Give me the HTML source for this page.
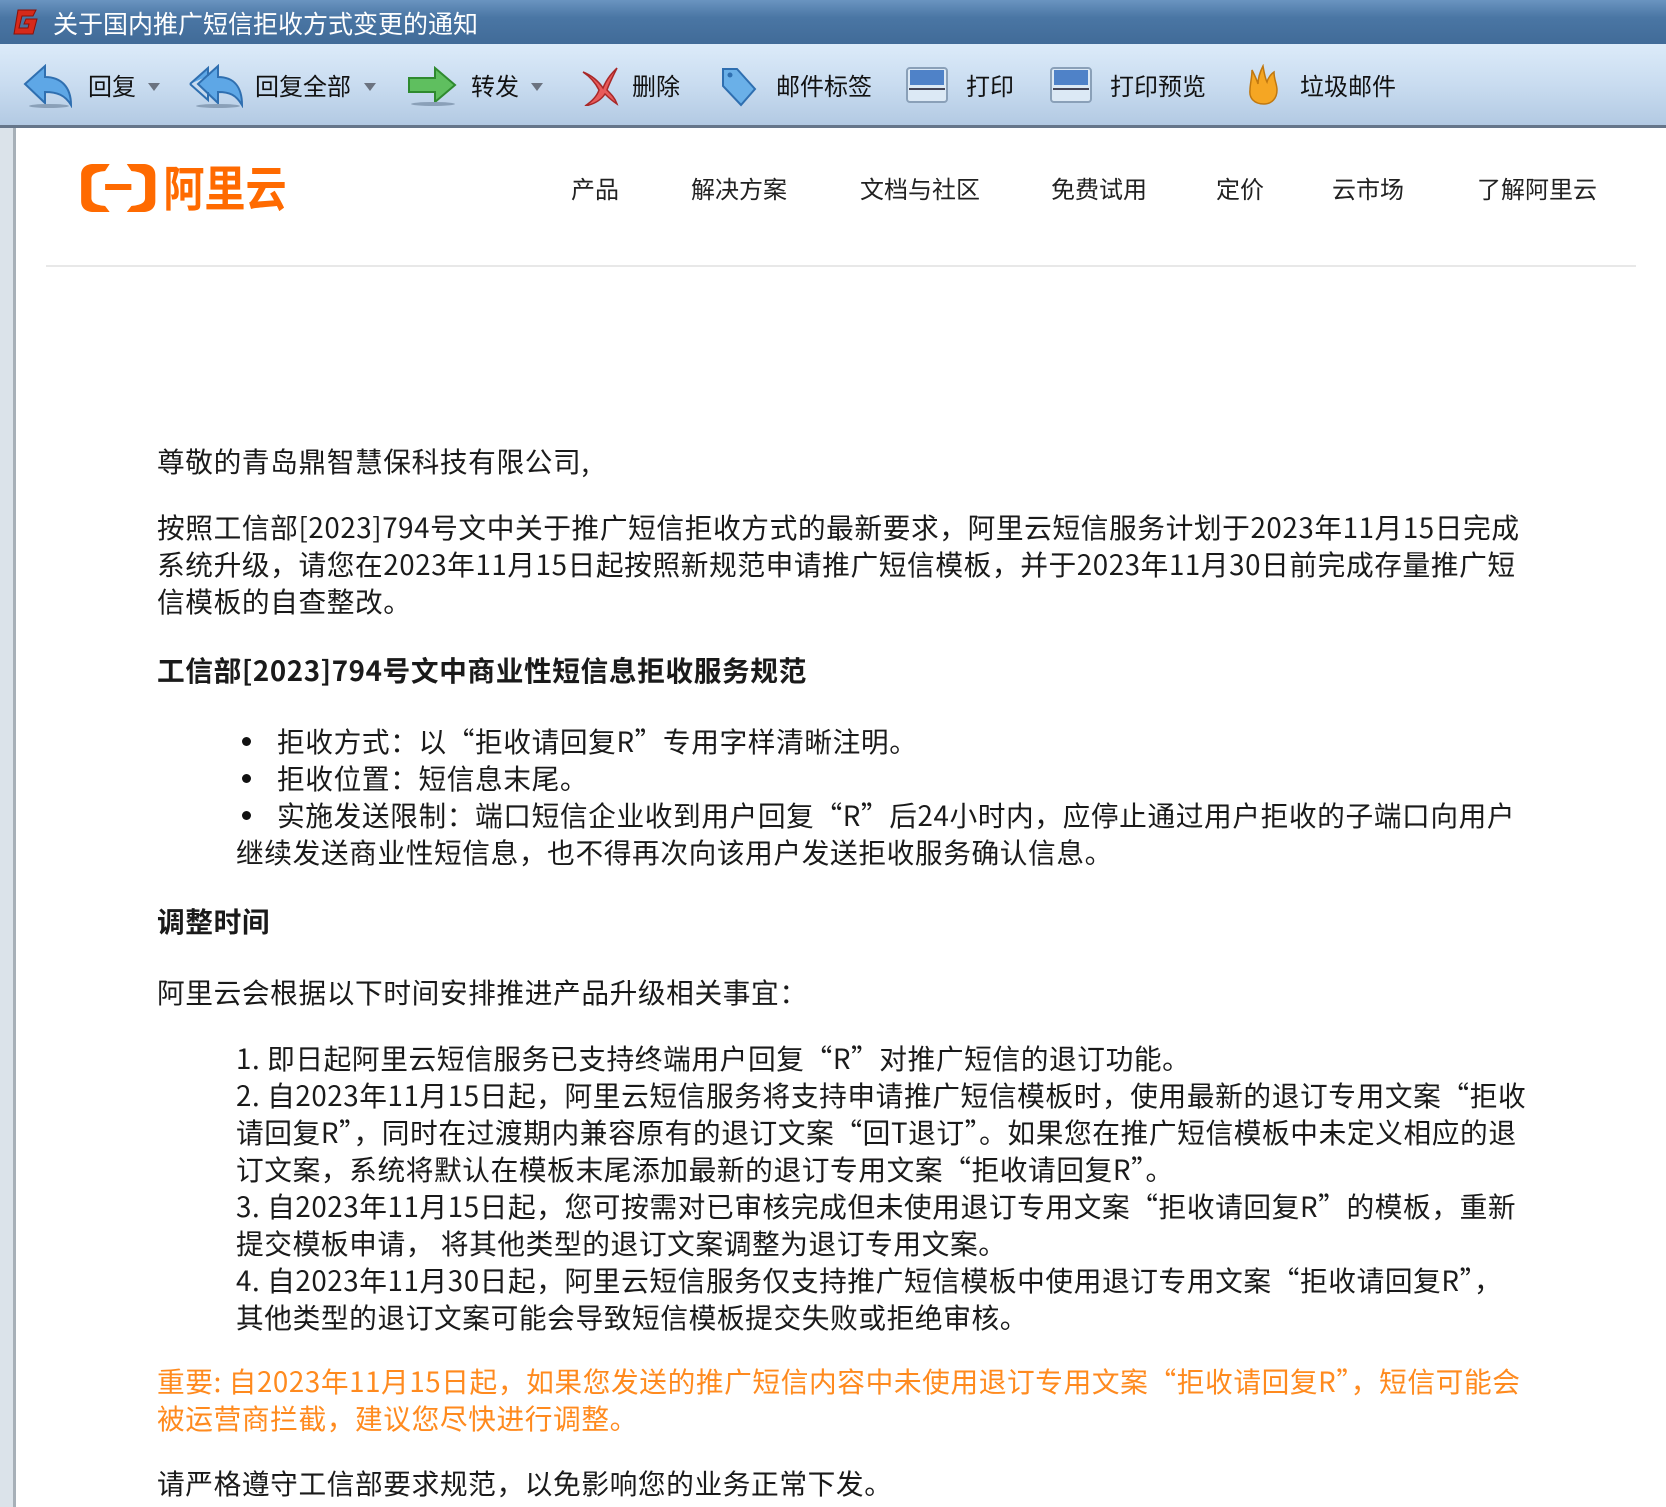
<!DOCTYPE html>
<html><head><meta charset="utf-8"><style>
*{margin:0;padding:0;box-sizing:border-box}
body{width:1666px;height:1507px;overflow:hidden;background:#fff;font-family:"Liberation Sans","Noto Sans CJK SC",sans-serif;position:relative}
.title{position:absolute;left:0;top:0;width:1666px;height:44px;background:linear-gradient(#6a94c0,#4a76a4 40%,#416b98);color:#fff;font-size:25px;line-height:46px;font-family:"Noto Sans CJK SC",sans-serif}
.title span{position:absolute;left:53px;top:0}
.tb{position:absolute;left:0;top:44px;width:1666px;height:84px;background:linear-gradient(#dcebf9,#c9dcf0 50%,#b3cae3);border-bottom:3px solid #66768a}
.tb .t{position:absolute;top:0;line-height:82px;font-size:24px;color:#111;font-family:"Noto Sans CJK SC",sans-serif}
.tb svg{position:absolute}
.dd{position:absolute;top:39px;width:0;height:0;border-left:6px solid transparent;border-right:6px solid transparent;border-top:8px solid #6b7380}
.strip{position:absolute;left:0;top:128px;width:16px;height:1379px;background:#dbe3ea;border-right:3px solid #a7b0b8}
.nav{position:absolute;top:171px;font-size:24px;color:#222;line-height:34px;font-family:"Noto Sans CJK SC",sans-serif}
.sep{position:absolute;left:46px;top:265px;width:1590px;height:2px;background:#e8e8e8}
.p{position:absolute;left:157px;font-family:"Noto Sans CJK SC",sans-serif;font-size:27.7px;letter-spacing:0.6px;line-height:37px;color:#1a1a1a;white-space:nowrap}
.b{font-weight:bold}
.or{color:#ff8a1e}
.dot{display:inline-block;width:9px;height:9px;border-radius:50%;background:#111;margin:0 26px 5px 6px;vertical-align:middle}
</style></head><body>
<div class="title">
<svg style="position:absolute;left:10px;top:7px" width="30" height="30" viewBox="0 0 30 30"><path d="M8 3h18l-3 6H12l-3 12h9l1-4h-5l2-5h11l-4 15H4z" fill="#d62a1a" stroke="#8a1008" stroke-width="1"/></svg>
<span>关于国内推广短信拒收方式变更的通知</span></div>
<div class="tb">
<svg style="left:23px;top:20px" width="52" height="44" viewBox="0 0 52 44"><path d="M2 20L22 2v11c16 0 26 10 26 28c-6-10-14-13-26-13v11z" fill="#5ea7e6" stroke="#2f6fb0" stroke-width="2"/><ellipse cx="26" cy="42" rx="20" ry="2" fill="#8aa0b8"/></svg>
<span class="t" style="left:88px">回复</span><i class="dd" style="left:148px"></i>
<svg style="left:188px;top:20px" width="58" height="44" viewBox="0 0 58 44"><path d="M2 20L20 4v8M10 20L30 2v11c16 0 24 10 24 28c-6-10-12-13-24-13v11z" fill="#5ea7e6" stroke="#2f6fb0" stroke-width="2"/><path d="M2 20L20 36v-8" fill="none" stroke="#2f6fb0" stroke-width="2"/><ellipse cx="30" cy="42" rx="22" ry="2" fill="#8aa0b8"/></svg>
<span class="t" style="left:255px">回复全部</span><i class="dd" style="left:364px"></i>
<svg style="left:407px;top:22px" width="52" height="40" viewBox="0 0 52 40"><path d="M2 12h26V2l20 17-20 17V26H2z" fill="#5fbf5f" stroke="#2f8a2f" stroke-width="2"/><ellipse cx="26" cy="38" rx="22" ry="2" fill="#8aa0b8"/></svg>
<span class="t" style="left:471px">转发</span><i class="dd" style="left:531px"></i>
<svg style="left:579px;top:22px" width="42" height="40" viewBox="0 0 42 40"><path d="M4 6c10 4 16 10 20 16C28 12 34 6 38 2c-4 8-8 16-10 22c4 4 8 8 10 14c-6-4-10-8-12-10c-4 6-10 10-20 12c6-4 12-10 14-16C16 16 10 10 4 6z" fill="#e85a5a" stroke="#a82828" stroke-width="1.5"/></svg>
<span class="t" style="left:632px">删除</span>
<svg style="left:719px;top:22px" width="40" height="42" viewBox="0 0 40 42"><path d="M4 3h14l18 20-14 16L4 20z" fill="#6ab0e8" stroke="#2f6fb0" stroke-width="2"/><circle cx="11" cy="9" r="2.5" fill="#2f6fb0"/></svg>
<span class="t" style="left:776px">邮件标签</span>
<svg style="left:905px;top:22px" width="44" height="38" viewBox="0 0 44 38"><rect x="2" y="2" width="40" height="34" rx="3" fill="#dce9f5" stroke="#8aa0b8" stroke-width="2"/><rect x="5" y="4" width="34" height="15" fill="#4f82c8"/><rect x="4" y="22" width="36" height="2" fill="#445"/></svg>
<span class="t" style="left:966px">打印</span>
<svg style="left:1049px;top:22px" width="44" height="38" viewBox="0 0 44 38"><rect x="2" y="2" width="40" height="34" rx="3" fill="#dce9f5" stroke="#8aa0b8" stroke-width="2"/><rect x="5" y="4" width="34" height="15" fill="#4f82c8"/><rect x="4" y="22" width="36" height="2" fill="#445"/></svg>
<span class="t" style="left:1110px">打印预览</span>
<svg style="left:1246px;top:20px" width="36" height="42" viewBox="0 0 36 42"><path d="M18 40c-10 0-15-6-14-14c0-6 2-12 2-20c3 6 5 10 6 14c0-6 2-12 5-18c1 6 2 12 4 16c1-4 4-8 7-10c0 8 3 12 3 18c0 8-5 14-13 14z" fill="#f5a623" stroke="#c07810" stroke-width="1.5"/></svg>
<span class="t" style="left:1300px">垃圾邮件</span>
</div>
<div class="strip"></div>
<svg style="position:absolute;left:80px;top:163px" width="210" height="50" viewBox="0 0 184 50" preserveAspectRatio="none">
<path d="M26 1H12C5 1 1 5 1 12v26c0 7 4 11 11 11h14l-4-6c-8-1-12-3-12-8V16c0-5 4-7 12-8z" fill="#ff6a00"/>
<path d="M41 1h14c7 0 11 4 11 11v26c0 7-4 11-11 11H41l4-6c8-1 12-3 12-8V16c0-5-4-7-12-8z" fill="#ff6a00"/>
<rect x="22" y="21" width="23" height="6" fill="#ff6a00"/>
<text x="0" y="0" transform="translate(73 43) scale(1 1.3)" font-family="Noto Sans CJK SC,sans-serif" font-size="37" font-weight="bold" fill="#ff6a00" textLength="108" lengthAdjust="spacingAndGlyphs">阿里云</text>
</svg>
<div class="nav" style="left:571px">产品</div>
<div class="nav" style="left:691px">解决方案</div>
<div class="nav" style="left:860px">文档与社区</div>
<div class="nav" style="left:1051px">免费试用</div>
<div class="nav" style="left:1216px">定价</div>
<div class="nav" style="left:1332px">云市场</div>
<div class="nav" style="left:1477px">了解阿里云</div>
<div class="sep"></div>

<div class="p" style="top:442px">尊敬的青岛鼎智慧保科技有限公司,</div>
<div class="p" style="top:508px">按照工信部[2023]794号文中关于推广短信拒收方式的最新要求，阿里云短信服务计划于2023年11月15日完成<br>系统升级，请您在2023年11月15日起按照新规范申请推广短信模板，并于2023年11月30日前完成存量推广短<br>信模板的自查整改。</div>
<div class="p b" style="top:651px">工信部[2023]794号文中商业性短信息拒收服务规范</div>
<div class="p" style="top:722px;left:236px"><span class="dot"></span>拒收方式：以“拒收请回复R”专用字样清晰注明。<br><span class="dot"></span>拒收位置：短信息末尾。<br><span class="dot"></span>实施发送限制：端口短信企业收到用户回复“R”后24小时内，应停止通过用户拒收的子端口向用户<br>继续发送商业性短信息，也不得再次向该用户发送拒收服务确认信息。</div>
<div class="p b" style="top:902px">调整时间</div>
<div class="p" style="top:973px">阿里云会根据以下时间安排推进产品升级相关事宜：</div>
<div class="p" style="top:1039px;left:236px">1. 即日起阿里云短信服务已支持终端用户回复“R”对推广短信的退订功能。<br>2. 自2023年11月15日起，阿里云短信服务将支持申请推广短信模板时，使用最新的退订专用文案“拒收<br>请回复R”，同时在过渡期内兼容原有的退订文案“回T退订”。如果您在推广短信模板中未定义相应的退<br>订文案，系统将默认在模板末尾添加最新的退订专用文案“拒收请回复R”。<br>3. 自2023年11月15日起，您可按需对已审核完成但未使用退订专用文案“拒收请回复R”的模板，重新<br>提交模板申请， 将其他类型的退订文案调整为退订专用文案。<br>4. 自2023年11月30日起，阿里云短信服务仅支持推广短信模板中使用退订专用文案“拒收请回复R”，<br>其他类型的退订文案可能会导致短信模板提交失败或拒绝审核。</div>
<div class="p or" style="top:1362px">重要: 自2023年11月15日起，如果您发送的推广短信内容中未使用退订专用文案“拒收请回复R”，短信可能会<br>被运营商拦截，建议您尽快进行调整。</div>
<div class="p" style="top:1464px">请严格遵守工信部要求规范，以免影响您的业务正常下发。</div>
</body></html>
